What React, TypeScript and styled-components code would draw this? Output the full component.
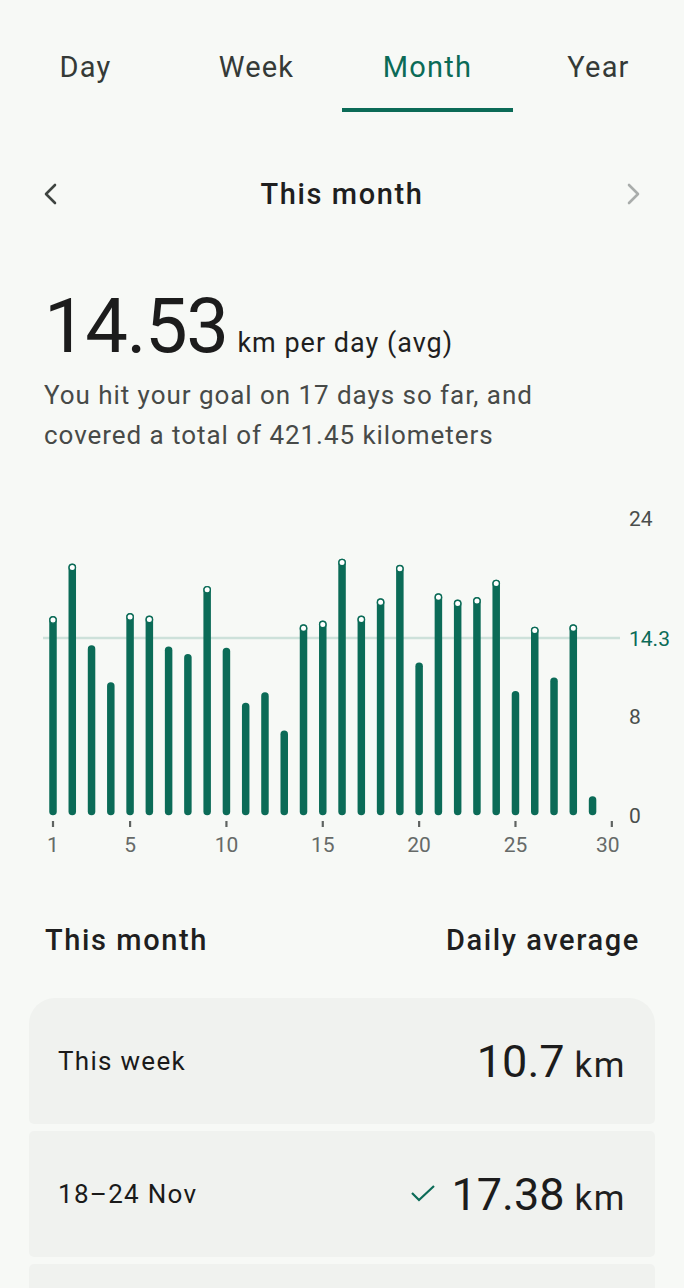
import React from 'react';
import styled, { createGlobalStyle, css } from 'styled-components';

const TEAL = '#0b6b57';

const GlobalStyle = createGlobalStyle`
  html, body {
    margin: 0;
    padding: 0;
    background: #f7f9f6;
  }
  body {
    font-family: Roboto, 'Liberation Sans', Arial, sans-serif;
    color: #1f1f1f;
  }
`;

const Page = styled.div`
  width: 684px;
  height: 1288px;
  overflow: hidden;
  background: #f7f9f6;
`;

const Tabs = styled.div`
  display: grid;
  grid-template-columns: repeat(4, 1fr);
`;

const Tab = styled.div<{ active?: boolean }>`
  height: 112px;
  box-sizing: border-box;
  padding-top: 26px;
  display: flex;
  align-items: center;
  justify-content: center;
  font-size: 29px;
  font-weight: 400;
  letter-spacing: 1.2px;
  color: #353a37;
  border-bottom: 4px solid transparent;
  ${(p) =>
    p.active &&
    css`
      color: ${TEAL};
      border-bottom-color: ${TEAL};
    `}
`;

const NavRow = styled.div`
  margin-top: 60px;
  height: 44px;
  padding: 0 38px;
  display: flex;
  align-items: center;
  justify-content: space-between;
`;

const NavTitle = styled.div`
  font-size: 29px;
  font-weight: 500;
  letter-spacing: 1.6px;
  color: #1f1f1f;
`;

const Chevron = ({ dir, color }: { dir: 'left' | 'right'; color: string }) => (
  <svg width="24" height="28" viewBox="0 0 24 28">
    <polyline
      points={dir === 'left' ? '17,5 8,14 17,23' : '7,5 16,14 7,23'}
      fill="none"
      stroke={color}
      strokeWidth="2.6"
      strokeLinecap="round"
      strokeLinejoin="round"
    />
  </svg>
);

const Summary = styled.div`
  margin-top: 73px;
  padding: 0 44px;
`;

const BigRow = styled.div`
  display: flex;
  align-items: baseline;
`;

const BigNumber = styled.span`
  font-size: 76px;
  line-height: 75px;
  letter-spacing: -1.5px;
  color: #1c1c1c;
`;

const BigUnit = styled.span`
  margin-left: 10px;
  font-size: 27px;
  letter-spacing: 1px;
  color: #1f1f1f;
`;

const Subtitle = styled.p`
  margin: 11px 0 0;
  font-size: 26px;
  line-height: 40px;
  letter-spacing: 0.95px;
  color: #474a48;
`;

const ChartWrap = styled.div`
  margin-top: 45px;
  height: 365px;
`;

const values = [
  15.76, 20.0, 13.7, 10.7, 16.0, 15.8, 13.6, 13.0, 18.2, 13.5, 9.05, 9.9, 6.8,
  15.1, 15.4, 20.4, 15.8, 17.2, 19.9, 12.3, 17.6, 17.1, 17.3, 18.7, 10.0, 14.9,
  11.1, 15.1, 1.5,
];
const GOAL = 14.3;
const BASE = 315;
const SCALE = 12.375;
const dayX = (d: number) => 53 + (d - 1) * 19.27;

const Chart = () => (
  <svg width="684" height="365" viewBox="0 0 684 365">
    <line x1="43" x2="620" y1={BASE - GOAL * SCALE} y2={BASE - GOAL * SCALE} stroke="#cde1da" strokeWidth="2.5" />
    {values.map((v, i) => {
      const x = dayX(i + 1);
      const top = BASE - v * SCALE;
      const hit = v >= GOAL;
      return (
        <g key={i}>
          <line
            x1={x}
            x2={x}
            y1={hit ? top : top + 3.5}
            y2={BASE - 3.5}
            stroke={TEAL}
            strokeWidth="7.5"
            strokeLinecap="round"
          />
          {hit && <circle cx={x} cy={top} r="3.2" fill="#fff" stroke={TEAL} strokeWidth="1.4" />}
        </g>
      );
    })}
    {[1, 5, 10, 15, 20, 25, 30].map((d) => (
      <g key={d}>
        <line x1={dayX(d)} x2={dayX(d)} y1="321" y2="327" stroke="#5f6361" strokeWidth="2.2" />
        <text
          x={d === 30 ? dayX(d) - 4 : dayX(d)}
          y="346"
          textAnchor="middle"
          dominantBaseline="middle"
          fontFamily="Roboto, sans-serif"
          fontSize="21"
          fill="#666a68"
        >
          {d}
        </text>
      </g>
    ))}
    {[
      { v: 24, label: '24', color: '#4a4e4c' },
      { v: GOAL, label: '14.3', color: TEAL },
      { v: 8, label: '8', color: '#4a4e4c' },
      { v: 0, label: '0', color: '#4a4e4c' },
    ].map((t) => (
      <text
        key={t.label}
        x="629"
        y={BASE - t.v * SCALE + 2}
        dominantBaseline="middle"
        fontFamily="Roboto, sans-serif"
        fontSize="21"
        fill={t.color}
      >
        {t.label}
      </text>
    ))}
  </svg>
);

const SectionHeader = styled.div`
  margin-top: 57px;
  padding: 0 44px 0 45px;
  height: 36px;
  display: flex;
  align-items: center;
  justify-content: space-between;
  font-size: 29px;
  font-weight: 500;
  letter-spacing: 1.6px;
  color: #1f1f1f;
`;

const CardList = styled.div`
  margin: 40px 29px 0;
  display: flex;
  flex-direction: column;
  gap: 7px;
`;

const Card = styled.div<{ first?: boolean }>`
  height: 126px;
  box-sizing: border-box;
  padding: 0 29px;
  display: flex;
  align-items: center;
  justify-content: space-between;
  background: #f0f2ef;
  border-radius: ${(p) => (p.first ? '26px 26px 5px 5px' : '5px')};
`;

const CardLabel = styled.span`
  font-size: 26px;
  font-weight: 400;
  letter-spacing: 1.3px;
  color: #1a1a1a;
`;

const CardValue = styled.div`
  display: flex;
  align-items: baseline;
`;

const ValueNumber = styled.span`
  font-size: 45px;
  letter-spacing: 0;
  color: #1c1c1c;
`;

const ValueUnit = styled.span`
  margin-left: 10px;
  font-size: 35px;
  letter-spacing: 1.5px;
  color: #1f1f1f;
`;

const Check = styled.svg`
  margin-right: 16px;
  align-self: center;
`;

const rows = [
  { label: 'This week', value: '10.7', hit: false },
  { label: '18–24 Nov', value: '17.38', hit: true },
];

export default function App() {
  return (
    <Page>
      <GlobalStyle />
      <Tabs>
        <Tab>Day</Tab>
        <Tab>Week</Tab>
        <Tab active>Month</Tab>
        <Tab>Year</Tab>
      </Tabs>
      <NavRow>
        <Chevron dir="left" color="#3f4441" />
        <NavTitle>This month</NavTitle>
        <Chevron dir="right" color="#a9adab" />
      </NavRow>
      <Summary>
        <BigRow>
          <BigNumber>14.53</BigNumber>
          <BigUnit>km per day (avg)</BigUnit>
        </BigRow>
        <Subtitle>
          You hit your goal on 17 days so far, and
          <br />
          covered a total of 421.45 kilometers
        </Subtitle>
      </Summary>
      <ChartWrap>
        <Chart />
      </ChartWrap>
      <SectionHeader>
        <span>This month</span>
        <span>Daily average</span>
      </SectionHeader>
      <CardList>
        {rows.map((r, i) => (
          <Card key={r.label} first={i === 0}>
            <CardLabel>{r.label}</CardLabel>
            <CardValue>
              {r.hit && (
                <Check width="26" height="20" viewBox="0 0 26 20">
                  <polyline points="2,9 9,16 24,2" fill="none" stroke={TEAL} strokeWidth="2.2" />
                </Check>
              )}
              <ValueNumber>{r.value}</ValueNumber>
              <ValueUnit>km</ValueUnit>
            </CardValue>
          </Card>
        ))}
        <Card />
      </CardList>
    </Page>
  );
}
